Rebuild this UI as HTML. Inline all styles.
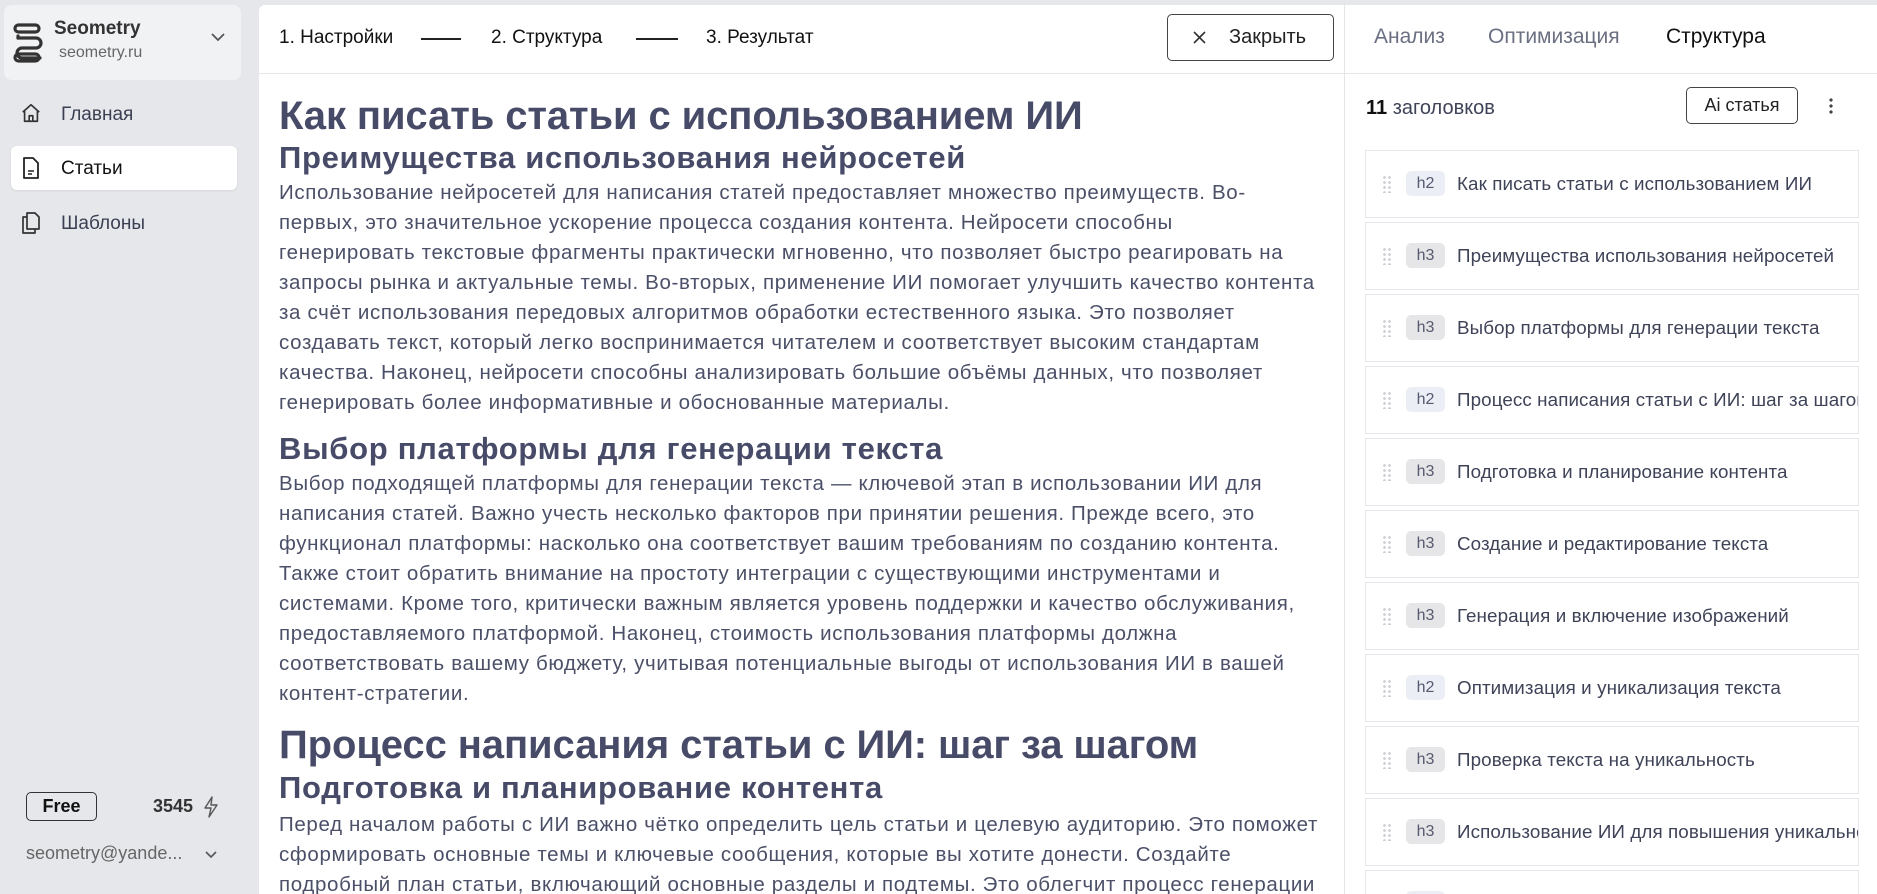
<!DOCTYPE html>
<html style="width:1877px;height:894px;overflow:hidden"><head><meta charset="utf-8"><style>
*{box-sizing:border-box;margin:0;padding:0}
body{width:1877px;height:894px;overflow:hidden;background:#e5e7eb;font-family:"Liberation Sans",sans-serif;position:relative;color:#4a4e65}
.abs{position:absolute}
.side .card{left:4px;top:5px;width:237px;height:75px;background:#f1f2f4;border-radius:8px}
.nav{left:20px;font-size:19px;color:#3b3f52}
.main{left:259px;top:5px;width:1085px;height:889px;background:#fff;border-radius:6px 0 0 0;overflow:hidden}
.topbar{left:0;top:0;width:1085px;height:69px;border-bottom:1px solid #e4e5e9}
.step{top:22px;font-size:19px;color:#111}
.ln{top:33px;height:1.5px;background:#222}
.content{left:20px;top:0;width:1070px}
.h1{position:absolute;font-size:40px;font-weight:bold;color:#474b68;white-space:nowrap;letter-spacing:-0.1px}
.h2{position:absolute;font-size:31px;font-weight:bold;color:#474b68;white-space:nowrap;letter-spacing:0.7px}
.p{position:absolute;font-size:20.5px;line-height:30px;color:#4b5068;white-space:nowrap;letter-spacing:0.65px}
.right{left:1344px;top:5px;width:533px;height:889px;background:#fff;border-left:1px solid #e4e5e9;overflow:hidden}
.tab{top:20px;font-size:21px;color:#6b6f82}
.item{left:20px;width:494px;height:68px;border:1.5px solid #e6e7ea;background:#fff;overflow:hidden}
.item .dots{position:absolute;left:16px;top:24px;width:10px;height:18px;background-image:radial-gradient(circle,#cfd1d6 1.3px,transparent 1.5px);background-size:5px 5px}
.item .b{position:absolute;left:40px;top:20px;width:39px;height:25px;border-radius:5px;font-size:16px;color:#555a6e;text-align:center;line-height:25px}
.b2{background:#eceef6}.b3{background:#e6e6e8}
.item .t{position:absolute;left:91px;top:20px;font-size:18.8px;color:#3f4358;white-space:nowrap;line-height:25px;letter-spacing:0.1px}
</style></head><body>
<div class="side">
<div class="abs card"></div>
<svg class="abs" style="left:13px;top:23px" width="32" height="40" viewBox="0 0 32 40"><g fill="none" stroke="#333" stroke-width="3.2" stroke-linecap="round"><rect x="2" y="2" width="24" height="7" rx="3.5"/><path d="M5 15h18a5 5 0 0 1 0 10H9a5 5 0 0 0 0 10h18"/><path d="M5 15v-2"/></g><rect x="2" y="31" width="24" height="7" rx="3.5" fill="none" stroke="#333" stroke-width="3.2"/></svg>
<div class="abs" style="left:54px;top:18px;font-size:19px;font-weight:bold;color:#333">Seometry</div>
<div class="abs" style="left:59px;top:44px;font-size:16px;color:#666">seometry.ru</div>
<svg class="abs" style="left:210px;top:32px" width="16" height="10"><path d="M2 2l6 6 6-6" stroke="#555" stroke-width="1.8" fill="none"/></svg>
<svg class="abs" style="left:20px;top:102px" width="22" height="22" viewBox="0 0 24 24"><path d="M3 11l9-8 9 8M5 9v12h14V9M10 21v-6h4v6" fill="none" stroke="#333" stroke-width="1.8" stroke-linejoin="round"/></svg>
<div class="abs nav" style="left:61px;top:104px">Главная</div>
<div class="abs" style="left:11px;top:146px;width:226px;height:44px;background:#fff;border-radius:6px;box-shadow:0 1px 2px rgba(0,0,0,.08)"></div>
<svg class="abs" style="left:21px;top:157px" width="20" height="22" viewBox="0 0 20 22"><path d="M3 1h9l5 5v15H3z" fill="none" stroke="#222" stroke-width="1.8" stroke-linejoin="round"/><path d="M7 14h6M7 17h4" stroke="#222" stroke-width="1.6"/></svg>
<div class="abs nav" style="left:61px;top:158px;color:#111">Статьи</div>
<svg class="abs" style="left:21px;top:212px" width="20" height="22" viewBox="0 0 20 22"><path d="M6 1h8l4 4v12H6z M6 5H2v16h12v-4" fill="none" stroke="#333" stroke-width="1.7" stroke-linejoin="round"/></svg>
<div class="abs nav" style="left:61px;top:213px">Шаблоны</div>
<div class="abs" style="left:26px;top:792px;width:71px;height:29px;border:1.5px solid #333;border-radius:5px;text-align:center;font-size:18px;font-weight:bold;line-height:26px;color:#111">Free</div>
<div class="abs" style="left:153px;top:796px;font-size:18px;font-weight:bold;color:#333">3545</div>
<svg class="abs" style="left:203px;top:796px" width="16" height="22" viewBox="0 0 16 22"><path d="M9 1L2 12h6l-2 9 8-12H8z" fill="none" stroke="#555" stroke-width="1.4" stroke-linejoin="round"/></svg>
<div class="abs" style="left:26px;top:843px;font-size:18px;color:#666">seometry@yande...</div>
<svg class="abs" style="left:205px;top:851px" width="12" height="8"><path d="M1 1l5 5 5-5" stroke="#555" stroke-width="1.6" fill="none"/></svg>
</div>

<div class="abs main">
<div class="abs topbar">
<div class="abs step" style="left:20px">1. Настройки</div>
<div class="abs ln" style="left:162px;width:40px"></div>
<div class="abs step" style="left:232px">2. Структура</div>
<div class="abs ln" style="left:377px;width:42px"></div>
<div class="abs step" style="left:447px">3. Результат</div>
<div class="abs" style="left:908px;top:9px;width:167px;height:47px;border:1.5px solid #444;border-radius:5px"></div>
<svg class="abs" style="left:934px;top:26px" width="13" height="13"><path d="M1 1l11 11M12 1L1 12" stroke="#333" stroke-width="1.6"/></svg>
<div class="abs" style="left:970px;top:21px;font-size:20px;color:#222">Закрыть</div>
</div>
<div class="abs content">
<div class="h1" style="top:89px">Как писать статьи с использованием ИИ</div>
<div class="h2" style="top:135px">Преимущества использования нейросетей</div>
<div class="p" style="top:173px">Использование нейросетей для написания статей предоставляет множество преимуществ. Во-<br>первых, это значительное ускорение процесса создания контента. Нейросети способны<br>генерировать текстовые фрагменты практически мгновенно, что позволяет быстро реагировать на<br>запросы рынка и актуальные темы. Во-вторых, применение ИИ помогает улучшить качество контента<br>за счёт использования передовых алгоритмов обработки естественного языка. Это позволяет<br>создавать текст, который легко воспринимается читателем и соответствует высоким стандартам<br>качества. Наконец, нейросети способны анализировать большие объёмы данных, что позволяет<br>генерировать более информативные и обоснованные материалы.</div>
<div class="h2" style="top:426px">Выбор платформы для генерации текста</div>
<div class="p" style="top:464px">Выбор подходящей платформы для генерации текста — ключевой этап в использовании ИИ для<br>написания статей. Важно учесть несколько факторов при принятии решения. Прежде всего, это<br>функционал платформы: насколько она соответствует вашим требованиям по созданию контента.<br>Также стоит обратить внимание на простоту интеграции с существующими инструментами и<br>системами. Кроме того, критически важным является уровень поддержки и качество обслуживания,<br>предоставляемого платформой. Наконец, стоимость использования платформы должна<br>соответствовать вашему бюджету, учитывая потенциальные выгоды от использования ИИ в вашей<br>контент-стратегии.</div>
<div class="h1" style="top:718px">Процесс написания статьи с ИИ: шаг за шагом</div>
<div class="h2" style="top:765px">Подготовка и планирование контента</div>
<div class="p" style="top:805px">Перед началом работы с ИИ важно чётко определить цель статьи и целевую аудиторию. Это поможет<br>сформировать основные темы и ключевые сообщения, которые вы хотите донести. Создайте<br>подробный план статьи, включающий основные разделы и подтемы. Это облегчит процесс генерации</div>
</div>
</div>

<div class="abs right">
<div class="abs" style="left:0;top:0;width:533px;height:69px;border-bottom:1px solid #e4e5e9"></div>
<div class="abs tab" style="left:29px">Анализ</div>
<div class="abs tab" style="left:143px">Оптимизация</div>
<div class="abs tab" style="left:321px;color:#111">Структура</div>
<div class="abs" style="left:21px;top:92px;font-size:20px;color:#3f4358"><b style="color:#111">11</b> заголовков</div>
<div class="abs" style="left:341px;top:82px;width:112px;height:37px;border:1.5px solid #444;border-radius:5px;text-align:center;line-height:34px;font-size:18px;color:#222">Ai статья</div>
<div class="abs" style="left:484px;top:92px;width:4px;height:18px;background-image:radial-gradient(circle,#444 1.6px,transparent 1.8px);background-size:4px 6px"></div>
<div class="abs item" style="top:145px"><i class="dots"></i><span class="b b2">h2</span><span class="t">Как писать статьи с использованием ИИ</span></div>
<div class="abs item" style="top:217px"><i class="dots"></i><span class="b b3">h3</span><span class="t">Преимущества использования нейросетей</span></div>
<div class="abs item" style="top:289px"><i class="dots"></i><span class="b b3">h3</span><span class="t">Выбор платформы для генерации текста</span></div>
<div class="abs item" style="top:361px"><i class="dots"></i><span class="b b2">h2</span><span class="t">Процесс написания статьи с ИИ: шаг за шагом</span></div>
<div class="abs item" style="top:433px"><i class="dots"></i><span class="b b3">h3</span><span class="t">Подготовка и планирование контента</span></div>
<div class="abs item" style="top:505px"><i class="dots"></i><span class="b b3">h3</span><span class="t">Создание и редактирование текста</span></div>
<div class="abs item" style="top:577px"><i class="dots"></i><span class="b b3">h3</span><span class="t">Генерация и включение изображений</span></div>
<div class="abs item" style="top:649px"><i class="dots"></i><span class="b b2">h2</span><span class="t">Оптимизация и уникализация текста</span></div>
<div class="abs item" style="top:721px"><i class="dots"></i><span class="b b3">h3</span><span class="t">Проверка текста на уникальность</span></div>
<div class="abs item" style="top:793px"><i class="dots"></i><span class="b b3">h3</span><span class="t">Использование ИИ для повышения уникальности</span></div>
<div class="abs item" style="top:865px"><i class="dots"></i><span class="b b2">h2</span><span class="t"></span></div>
</div>
</body></html>
